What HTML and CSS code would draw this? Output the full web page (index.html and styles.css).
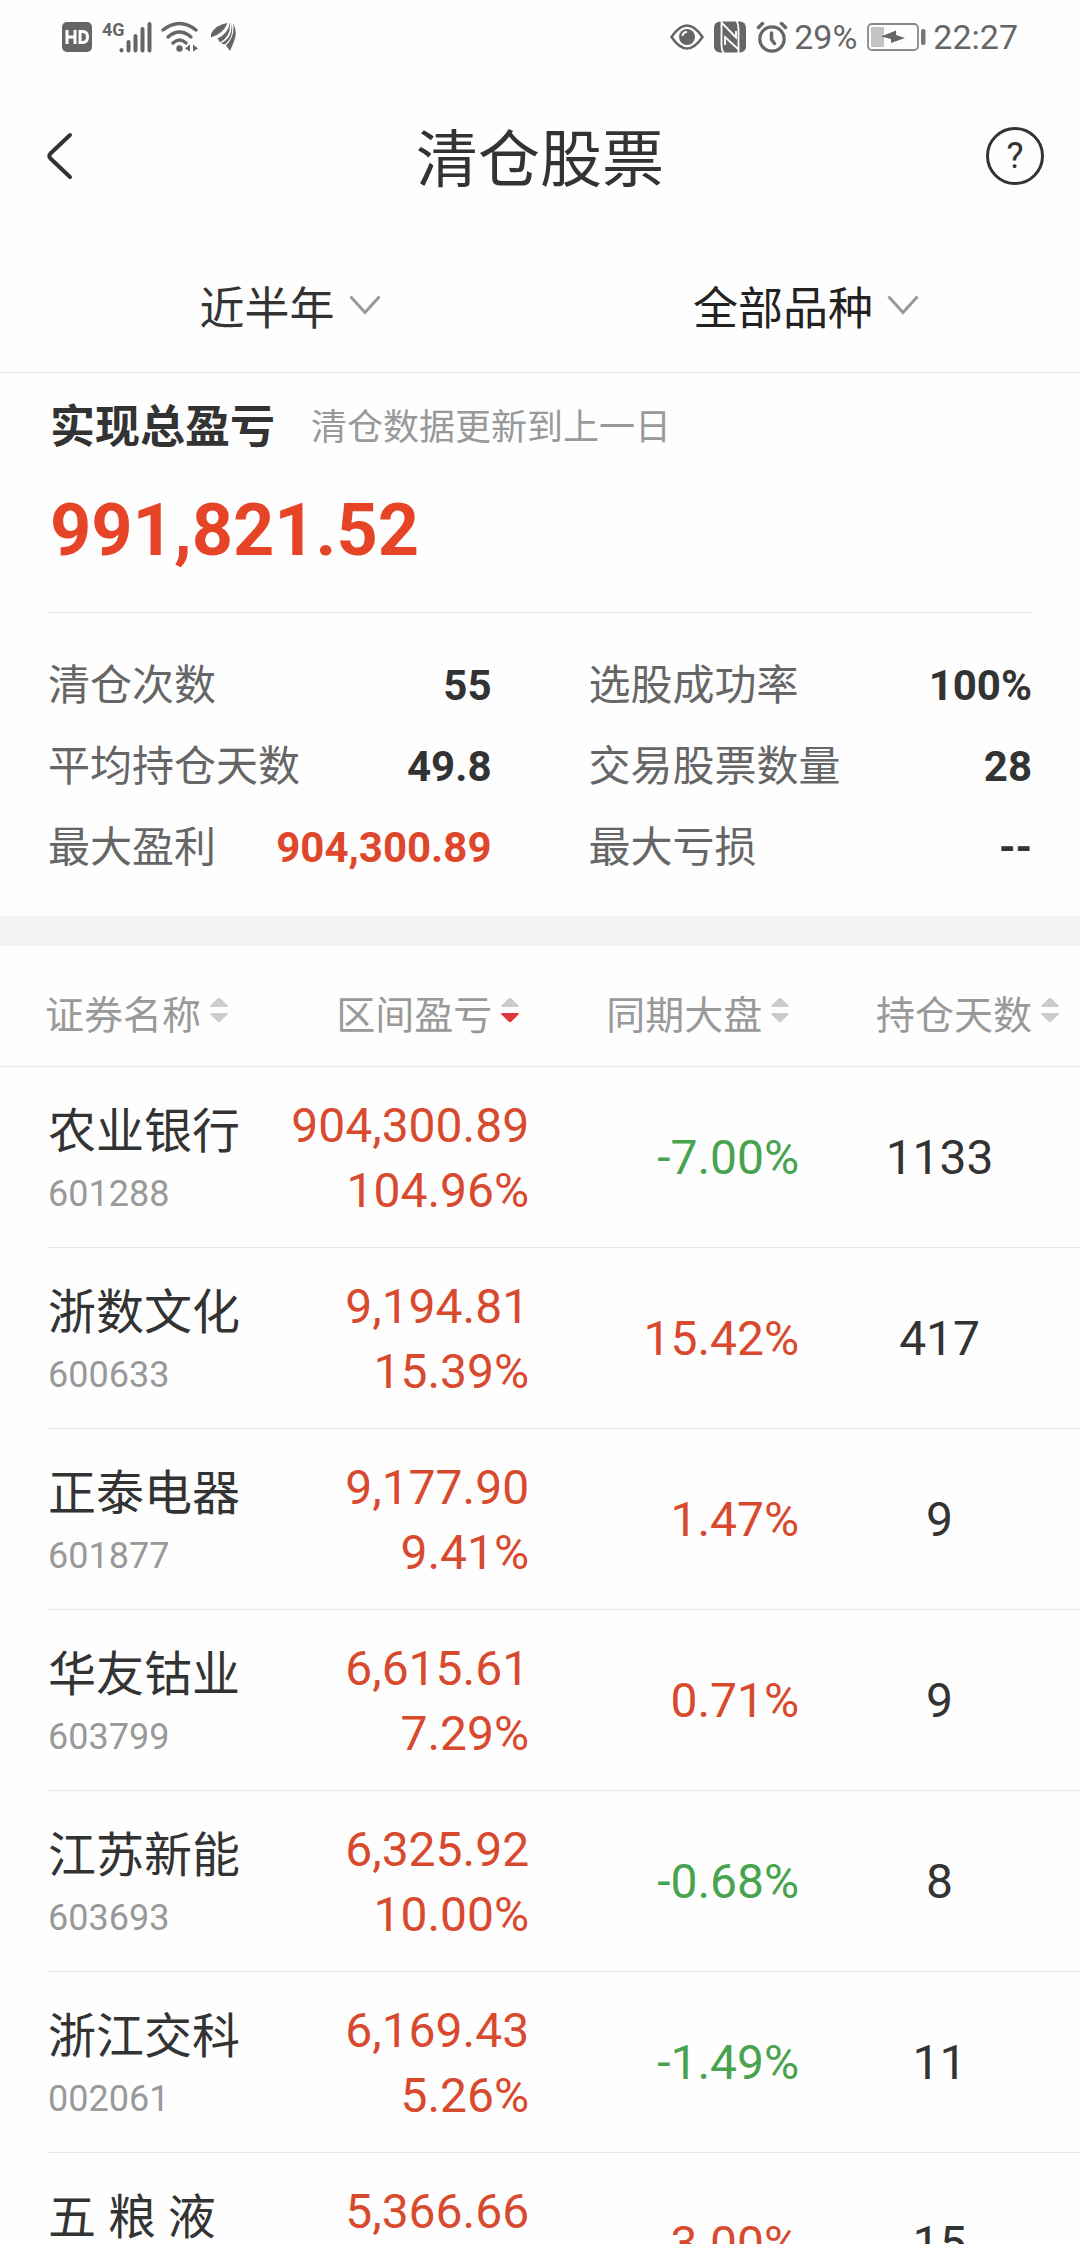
FILE: index.html
```html
<!DOCTYPE html>
<html lang="zh-CN">
<head>
<meta charset="utf-8">
<meta name="viewport" content="width=device-width, initial-scale=1">
<title>清仓股票</title>
<link rel="stylesheet" href="styles.css">
</head>
<body>
<svg width="0" height="0" class="sprite" aria-hidden="true">
  <symbol id="sort" viewBox="0 0 18 26">
    <path class="up" d="M7.500 1.600Q9 .4 10.500 1.600L17.500 8.500Q18.300 9.800 17 10H1Q-.3 9.800.5 8.500Z"/>
    <path class="down" d="M7.500 24.400Q9 25.600 10.500 24.400L17.500 17.500Q18.300 16.200 17 16H1Q-.3 16.200.5 17.500Z"/>
  </symbol>
  <symbol id="chevron" viewBox="0 0 32 20">
    <path d="M1.500 1.500L16 17.500L30.500 1.500" fill="none" stroke="#999" stroke-width="3"/>
  </symbol>
</svg>
<div class="app">
  <div class="status">
    <div class="status-left">
      <svg width="30" height="30" viewBox="0 0 30 30"><rect width="30" height="30" rx="5" fill="#666"/><path d="M5 8v14M13 8v14M5 15h8M18 9.500v11h2.500q5 0 5-5.500t-5-5.500z" fill="none" stroke="#fff" stroke-width="3"/></svg>
      <span class="net">4G</span>
      <svg class="signal" width="34" height="32" viewBox="0 0 34 32"><path d="M2.500 29v.5M9.500 21v8.500M16.500 15v14.500M23.500 8v21.500M30.500 3v26.500" stroke="#666" stroke-width="4" stroke-linecap="round"/></svg>
      <svg class="wifi" width="38" height="32" viewBox="0 0 38 32"><g fill="none" stroke="#666" stroke-width="3.400" stroke-linecap="round"><path d="M2 9Q18.500-4 35 9"/><path d="M7 16Q18.500 6 30 16"/><path d="M12 22Q18.500 16 25 22"/></g><circle cx="18.500" cy="27.500" r="3.200" fill="#666"/><path d="M24 27.500l5-4v7zM37 27.500l-5-4v7z" fill="#666"/></svg>
      <svg width="26" height="30" viewBox="0 0 26 30"><path d="M16.500 1Q4 3 0 12v3.500Q13 11 16.500 1zM19 .5Q17 12 6.500 16.500L9 20.500Q20 15 19 .5zM20.500.5Q22 16 10 21.500l4 1Q23.500 15 20.500.5zM22 1q5 9 1 18.500L19 29l-4-5.500Q24.500 14 22 1z" fill="#666"/></svg>
    </div>
    <div class="status-right">
      <svg width="34" height="26" viewBox="0 0 34 26"><path d="M1.500 13Q17-10 32.500 13Q17 36 1.500 13z" fill="none" stroke="#666" stroke-width="2.500"/><circle cx="17" cy="13" r="8" fill="#666"/><path d="M12.500 12q.5-4 4.500-4" fill="none" stroke="#fff" stroke-width="1.800"/></svg>
      <svg width="32" height="32" viewBox="0 0 32 32"><rect y=".5" width="32" height="31" rx="6" fill="#666"/><path d="M7.500 0v24q0 5 2 8M24.500 32V9q0-6-2-9" fill="none" stroke="#fff" stroke-width="1.800"/><path d="M8 2L22 16.500V10M24 28L11 16v8" fill="none" stroke="#fff" stroke-width="1.800"/></svg>
      <svg width="32" height="32" viewBox="0 0 32 32"><g fill="none" stroke="#666" stroke-linecap="round"><circle cx="16" cy="18" r="12.200" stroke-width="3.200"/><path d="M2.500 6.500l4-4M29.500 6.500l-4-4M15.500 12v6.500l3 4" stroke-width="3.500"/></g></svg>
      <span class="level">29%</span>
      <svg class="battery" width="60" height="28" viewBox="0 0 60 28"><rect x="1" y="1" width="50" height="26" rx="4" fill="none" stroke="#888" stroke-width="1.800"/><rect x="4" y="4" width="13" height="20" fill="#c4c4c4"/><path d="M14 13.500L29 7.500V12L38 15L24 20V16z" fill="#666"/><rect x="54" y="6" width="4.500" height="16" rx="2" fill="#777"/></svg>
      <span>22:27</span>
    </div>
  </div>

  <header class="titlebar">
    <button class="icon-btn" aria-label="返回"><svg width="30" height="50" viewBox="0 0 30 50"><path d="M26 4L6.500 22.500Q4 25 6.500 27.500L26 46" fill="none" stroke="#333" stroke-width="4" stroke-linecap="round"/></svg></button>
    <h1>清仓股票</h1>
    <button class="icon-btn help" aria-label="帮助">?</button>
  </header>

  <nav class="filters">
    <button>近半年<svg width="32" height="20"><use href="#chevron"/></svg></button>
    <button class="active">全部品种<svg width="32" height="20"><use href="#chevron"/></svg></button>
  </nav>

  <section class="summary">
    <div class="summary-head"><h2>实现总盈亏</h2><span>清仓数据更新到上一日</span></div>
    <p class="total">991,821.52</p>
    <dl class="stats">
      <div><dt>清仓次数</dt><dd>55</dd></div>
      <div><dt>选股成功率</dt><dd>100%</dd></div>
      <div><dt>平均持仓天数</dt><dd>49.8</dd></div>
      <div><dt>交易股票数量</dt><dd>28</dd></div>
      <div><dt>最大盈利</dt><dd class="gain">904,300.89</dd></div>
      <div><dt>最大亏损</dt><dd>--</dd></div>
    </dl>
  </section>

  <main class="list">
    <table>
      <colgroup><col class="c-name"><col class="c-pl"><col class="c-market"><col class="c-days"></colgroup>
      <thead>
        <tr>
          <th><button>证券名称<svg width="18" height="26"><use href="#sort"/></svg></button></th>
          <th><button class="desc">区间盈亏<svg width="18" height="26"><use href="#sort"/></svg></button></th>
          <th><button>同期大盘<svg width="18" height="26"><use href="#sort"/></svg></button></th>
          <th><button>持仓天数<svg width="18" height="26"><use href="#sort"/></svg></button></th>
        </tr>
      </thead>
      <tbody>
        <tr><td><b>农业银行</b><small>601288</small></td><td class="up">904,300.89<br>104.96%</td><td class="down">-7.00%</td><td>1133</td></tr>
        <tr><td><b>浙数文化</b><small>600633</small></td><td class="up">9,194.81<br>15.39%</td><td class="up">15.42%</td><td>417</td></tr>
        <tr><td><b>正泰电器</b><small>601877</small></td><td class="up">9,177.90<br>9.41%</td><td class="up">1.47%</td><td>9</td></tr>
        <tr><td><b>华友钴业</b><small>603799</small></td><td class="up">6,615.61<br>7.29%</td><td class="up">0.71%</td><td>9</td></tr>
        <tr><td><b>江苏新能</b><small>603693</small></td><td class="up">6,325.92<br>10.00%</td><td class="down">-0.68%</td><td>8</td></tr>
        <tr><td><b>浙江交科</b><small>002061</small></td><td class="up">6,169.43<br>5.26%</td><td class="down">-1.49%</td><td>11</td></tr>
        <tr><td><b>五 粮 液</b></td><td class="up">5,366.66</td><td class="up">3.00%</td><td>15</td></tr>
      </tbody>
    </table>
  </main>
</div>
</body>
</html>
```
FILE: styles.css
```css
* { box-sizing: border-box; margin: 0; padding: 0; }

body {
  background: #fefefe;
  color: #333;
  font-family: Roboto, "Noto Sans CJK SC", sans-serif;
}

button {
  background: none;
  border: 0;
  color: inherit;
  font: inherit;
}

svg { display: block; flex: none; }
.sprite { position: absolute; }

.app {
  display: flex;
  flex-direction: column;
  height: 100vh;
  overflow: hidden;
}

/* Phone status bar */
.status {
  display: flex;
  justify-content: space-between;
  align-items: center;
  height: 74px;
  padding: 0 62px;
  color: #666;
  font-size: 34px;
  line-height: 38px;
}
.status-left, .status-right { display: flex; align-items: center; }
.status-right { gap: 10px; }
.level { margin-left: -4px; }
.battery { margin-right: -4px; }
.net {
  align-self: flex-start;
  margin-left: 10px;
  font-size: 18px;
  font-weight: 700;
  line-height: 18px;
}
.signal { margin-left: -6px; }
.wifi { margin: 0 12px 0 8px; }

/* Title bar */
.titlebar {
  display: grid;
  grid-template-columns: 58px 1fr 58px;
  align-items: center;
  height: 164px;
  padding: 0 36px;
}
.titlebar .icon-btn:first-child { padding-left: 8px; }
.titlebar h1 {
  padding-top: 10px;
  font-size: 62px;
  font-weight: 400;
  line-height: 80px;
  text-align: center;
}
.titlebar .help {
  width: 58px;
  height: 58px;
  border: 3px solid #333;
  border-radius: 50%;
  font-size: 36px;
  line-height: 50px;
}

/* Filter tabs */
.filters {
  display: grid;
  grid-template-columns: 54fr 50fr;
  height: 135px;
  padding: 0 24px 0 16px;
  border-bottom: 1px solid #e8e8e8;
}
.filters button {
  display: flex;
  align-items: center;
  justify-content: center;
  gap: 14px;
  font-size: 45px;
}
.filters button:first-child { padding-left: 8px; }
.filters .active { color: #222; }

/* Totals */
.summary {
  padding: 25px 48px 28px;
  border-bottom: 30px solid #f4f4f4;
}
.summary-head {
  display: flex;
  align-items: center;
  gap: 36px;
  padding-left: 2px;
  line-height: 60px;
}
.summary-head h2 { font-size: 45px; font-weight: 700; }
.summary-head span { color: #999; font-size: 36px; }
.total {
  padding: 19px 2px 27px;
  border-bottom: 1px solid #e8e8e8;
  color: #e64426;
  font-size: 72px;
  font-weight: 700;
  line-height: 108px;
}
.stats {
  display: grid;
  grid-template-columns: 1fr 1fr;
  column-gap: 97px;
  padding-top: 32px;
  font-size: 42px;
  line-height: 81px;
}
.stats div { display: flex; justify-content: space-between; }
.stats dt { color: #666; }
.stats dd { font-weight: 700; }
.stats .gain { color: #de472b; }

/* Holdings list */
.list { flex: 1; min-height: 0; overflow: hidden; }
table {
  width: 100%;
  border-collapse: separate;
  border-spacing: 0;
  table-layout: fixed;
}
.c-name { width: 22%; }
.c-pl { width: 27%; }
.c-market { width: 25%; }
.c-days { width: 26%; }
th {
  height: 121px;
  padding-right: 10px;
  border-bottom: 1px solid #e8e8e8;
  color: #999;
  font-size: 39px;
  font-weight: 400;
}
th button {
  display: flex;
  align-items: center;
  gap: 9px;
  margin-left: auto;
  padding-top: 12px;
  white-space: nowrap;
}
th svg { margin-top: -4px; }
th:first-child { padding-left: 45px; }
th:first-child button { margin-left: 0; }
th:last-child { padding-right: 21px; }
.up, .down { fill: #ccc; }
.desc { --down: #e0383a; }
.down { fill: var(--down, #ccc); }

td {
  height: 181px;
  border-bottom: 1px solid #e8e8e8;
  font-size: 48px;
  line-height: 65px;
  text-align: right;
}
td:nth-child(2) { padding-top: 26px; vertical-align: top; }
td:first-child {
  padding: 32px 0 0 48px;
  border-bottom: 0;
  background: linear-gradient(#e8e8e8, #e8e8e8) right bottom / calc(100% - 48px) 1px no-repeat;
  text-align: left;
  vertical-align: top;
  white-space: nowrap;
}
td:last-child { text-align: center; }
td b { display: block; font-weight: 400; }
td small { display: block; color: #999; font-size: 36px; line-height: 60px; }
td.up { color: #d84a2e; }
td.down { color: #48a34e; }
```
